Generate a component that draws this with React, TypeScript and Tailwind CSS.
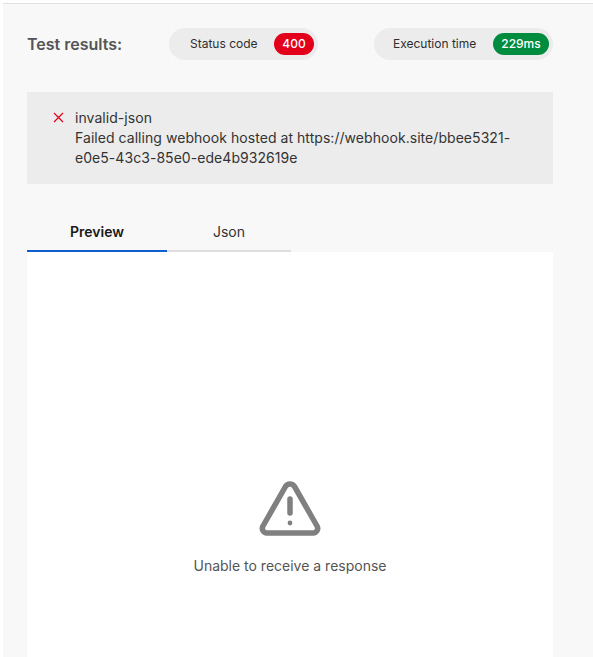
import React from 'react';

const Metric = ({ label, value, className, badgeClass }: { label: string; value: string; className: string; badgeClass: string }) => (
  <div className={`flex h-8 items-center justify-between rounded-full bg-[#ececec] pr-1 ${className}`}>
    <span className="text-xs text-[#2e2e2e]">{label}</span>
    <span className={`flex h-[22px] items-center justify-center rounded-full text-xs font-medium text-white ${badgeClass}`}>{value}</span>
  </div>
);

export default function App() {
  return (
    <div className="h-[657px] w-[593px] overflow-hidden bg-white pt-[3px] pl-[3px] font-['Inter',sans-serif]">
      <div className="h-full border-t border-[#e2e2e2] bg-[#f8f8f8] pr-10 pl-6">
        <div className="flex h-[88px] items-center pb-[8px]">
          <h2 className="w-[142px] text-base font-semibold text-[#555555]">Test results:</h2>
          <Metric label="Status code" value="400" className="w-[149px] pl-[21px]" badgeClass="w-10 bg-[#e2001a]" />
          <Metric label="Execution time" value="229ms" className="ml-14 w-[179px] pl-[19px]" badgeClass="w-14 bg-[#008c3f]" />
        </div>
        <div className="flex h-[92px] items-start bg-[#ececec] pt-4 pl-[26px] text-sm leading-5 tracking-[0.05px] text-[#333333]">
          <span className="mt-[4px] mr-[11px] shrink-0">
            <svg width="11" height="11" viewBox="0 0 11 11" fill="none" stroke="#e2001a" strokeWidth="1.2">
              <path d="M1 1l9 9M10 1l-9 9" />
            </svg>
          </span>
          <p className="w-[440px]">
            invalid-json
            <br />
            Failed calling webhook hosted at https://webhook.site/bbee5321-e0e5-43c3-85e0-ede4b932619e
          </p>
        </div>
        <div className="mt-[29px] flex h-[39px] text-sm">
          <div className="flex w-[140px] items-center justify-center border-b-2 border-[#0f5fcf] font-semibold text-[#1a1a1a]">Preview</div>
          <div className="flex w-[124px] items-center justify-center border-b-2 border-[#dedede] text-[#333333]">Json</div>
        </div>
        <div className="flex h-[405px] flex-col items-center bg-white pt-[228px]">
          <svg width="64" height="56" viewBox="0 0 64 56" fill="none" stroke="#808080" strokeWidth="5.5" strokeLinejoin="round" strokeLinecap="round">
            <path d="M27.5 6.5a5.2 5.2 0 0 1 9 0L59 46a4.6 4.6 0 0 1-4 7H9a4.6 4.6 0 0 1-4-7z" />
            <path d="M32 19v14" />
            <circle cx="32" cy="43" r="1.4" fill="#808080" strokeWidth="2" />
          </svg>
          <p className="mt-5 text-sm text-[#555555]">Unable to receive a response</p>
        </div>
      </div>
    </div>
  );
}
